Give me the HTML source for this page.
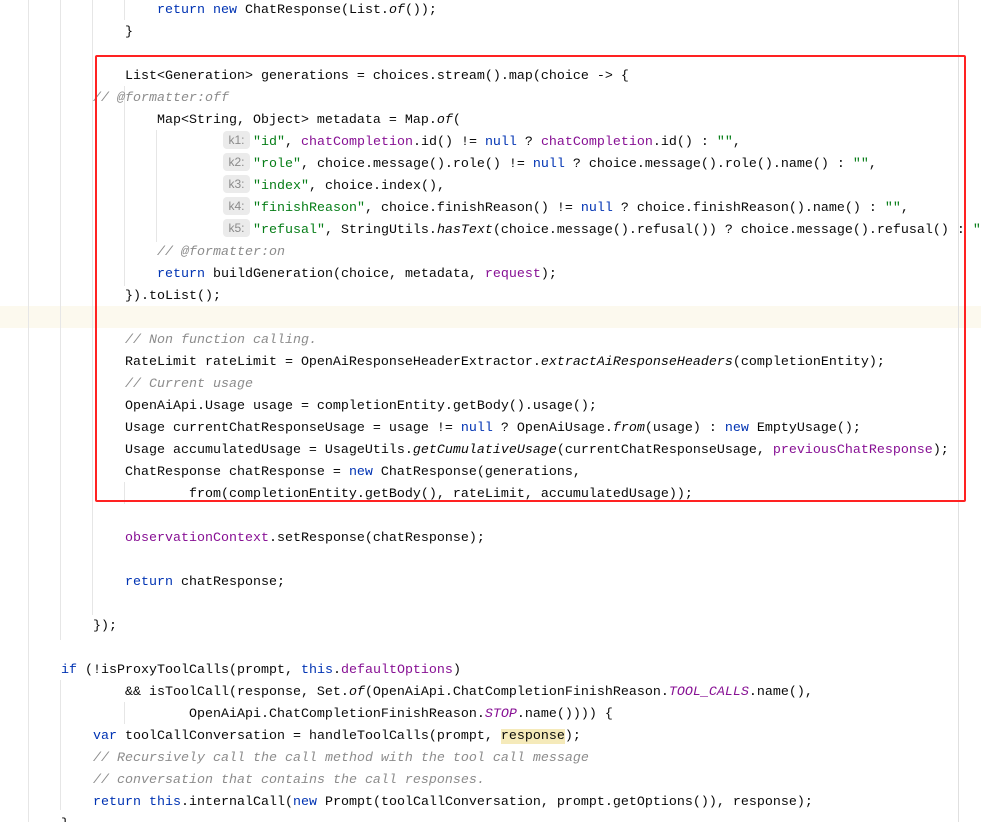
<!DOCTYPE html>
<html><head><meta charset="utf-8"><style>
html,body{margin:0;padding:0;background:#fff;width:981px;height:822px;overflow:hidden;position:relative}
pre{position:absolute;left:29px;top:0px;margin:0;font-family:"Liberation Mono",monospace;font-size:13.33px;line-height:22px;color:#080808;white-space:pre}
.k{color:#0033b3}.s{color:#067d17}.f{color:#871094}.c{color:#8c8c8c;font-style:italic}.i{font-style:italic}.fi{color:#871094;font-style:italic}
.h{display:inline-block;width:27px;margin-left:2px;margin-right:3px;height:18px;line-height:18px;background:#ebebeb;border-radius:4px;color:#8a8a8a;font-family:"Liberation Sans",sans-serif;font-size:12px;text-align:center;vertical-align:middle;position:relative;top:-1px}
.g{position:absolute;width:1px;background:#e6e6e6}
.hl{background:#f5eaba}
</style></head><body>
<div style="position:absolute;left:0;top:306px;width:981px;height:22px;background:#fcf9ee"></div>
<div class="g" style="left:28px;top:0;height:822px"></div>
<div class="g" style="left:60px;top:0;height:640px"></div>
<div class="g" style="left:60px;top:680px;height:130px"></div>
<div class="g" style="left:92px;top:0;height:615px"></div>
<div class="g" style="left:124px;top:0;height:20px"></div>
<div class="g" style="left:124px;top:86px;height:200px"></div>
<div class="g" style="left:156px;top:130px;height:112px"></div>
<div class="g" style="left:124px;top:482px;height:22px"></div>
<div class="g" style="left:124px;top:702px;height:22px"></div>
<div class="g" style="left:958px;top:0;height:822px;background:#e0e0e0"></div>
<pre>                <span class="k">return new</span> ChatResponse(List.<span class="i">of</span>());
            }

            List&lt;Generation&gt; generations = choices.stream().map(choice -&gt; {
        <span class="c">// @formatter:off</span>
                Map&lt;String, Object&gt; metadata = Map.<span class="i">of</span>(
                        <span class="h">k1:</span><span class="s">"id"</span>, <span class="f">chatCompletion</span>.id() != <span class="k">null</span> ? <span class="f">chatCompletion</span>.id() : <span class="s">""</span>,
                        <span class="h">k2:</span><span class="s">"role"</span>, choice.message().role() != <span class="k">null</span> ? choice.message().role().name() : <span class="s">""</span>,
                        <span class="h">k3:</span><span class="s">"index"</span>, choice.index(),
                        <span class="h">k4:</span><span class="s">"finishReason"</span>, choice.finishReason() != <span class="k">null</span> ? choice.finishReason().name() : <span class="s">""</span>,
                        <span class="h">k5:</span><span class="s">"refusal"</span>, StringUtils.<span class="i">hasText</span>(choice.message().refusal()) ? choice.message().refusal() : <span class="s">""</span>
                <span class="c">// @formatter:on</span>
                <span class="k">return</span> buildGeneration(choice, metadata, <span class="f">request</span>);
            }).toList();

            <span class="c">// Non function calling.</span>
            RateLimit rateLimit = OpenAiResponseHeaderExtractor.<span class="i">extractAiResponseHeaders</span>(completionEntity);
            <span class="c">// Current usage</span>
            OpenAiApi.Usage usage = completionEntity.getBody().usage();
            Usage currentChatResponseUsage = usage != <span class="k">null</span> ? OpenAiUsage.<span class="i">from</span>(usage) : <span class="k">new</span> EmptyUsage();
            Usage accumulatedUsage = UsageUtils.<span class="i">getCumulativeUsage</span>(currentChatResponseUsage, <span class="f">previousChatResponse</span>);
            ChatResponse chatResponse = <span class="k">new</span> ChatResponse(generations,
                    from(completionEntity.getBody(), rateLimit, accumulatedUsage));

            <span class="f">observationContext</span>.setResponse(chatResponse);

            <span class="k">return</span> chatResponse;

        });

    <span class="k">if</span> (!isProxyToolCalls(prompt, <span class="k">this</span>.<span class="f">defaultOptions</span>)
            &amp;&amp; isToolCall(response, Set.<span class="i">of</span>(OpenAiApi.ChatCompletionFinishReason.<span class="fi">TOOL_CALLS</span>.name(),
                    OpenAiApi.ChatCompletionFinishReason.<span class="fi">STOP</span>.name()))) {
        <span class="k">var</span> toolCallConversation = handleToolCalls(prompt, <span class="hl">response</span>);
        <span class="c">// Recursively call the call method with the tool call message</span>
        <span class="c">// conversation that contains the call responses.</span>
        <span class="k">return this</span>.internalCall(<span class="k">new</span> Prompt(toolCallConversation, prompt.getOptions()), response);
    }
</pre>
<div style="position:absolute;left:95px;top:55px;width:867px;height:443px;border:2.5px solid #f22;border-radius:2px"></div>
</body></html>
